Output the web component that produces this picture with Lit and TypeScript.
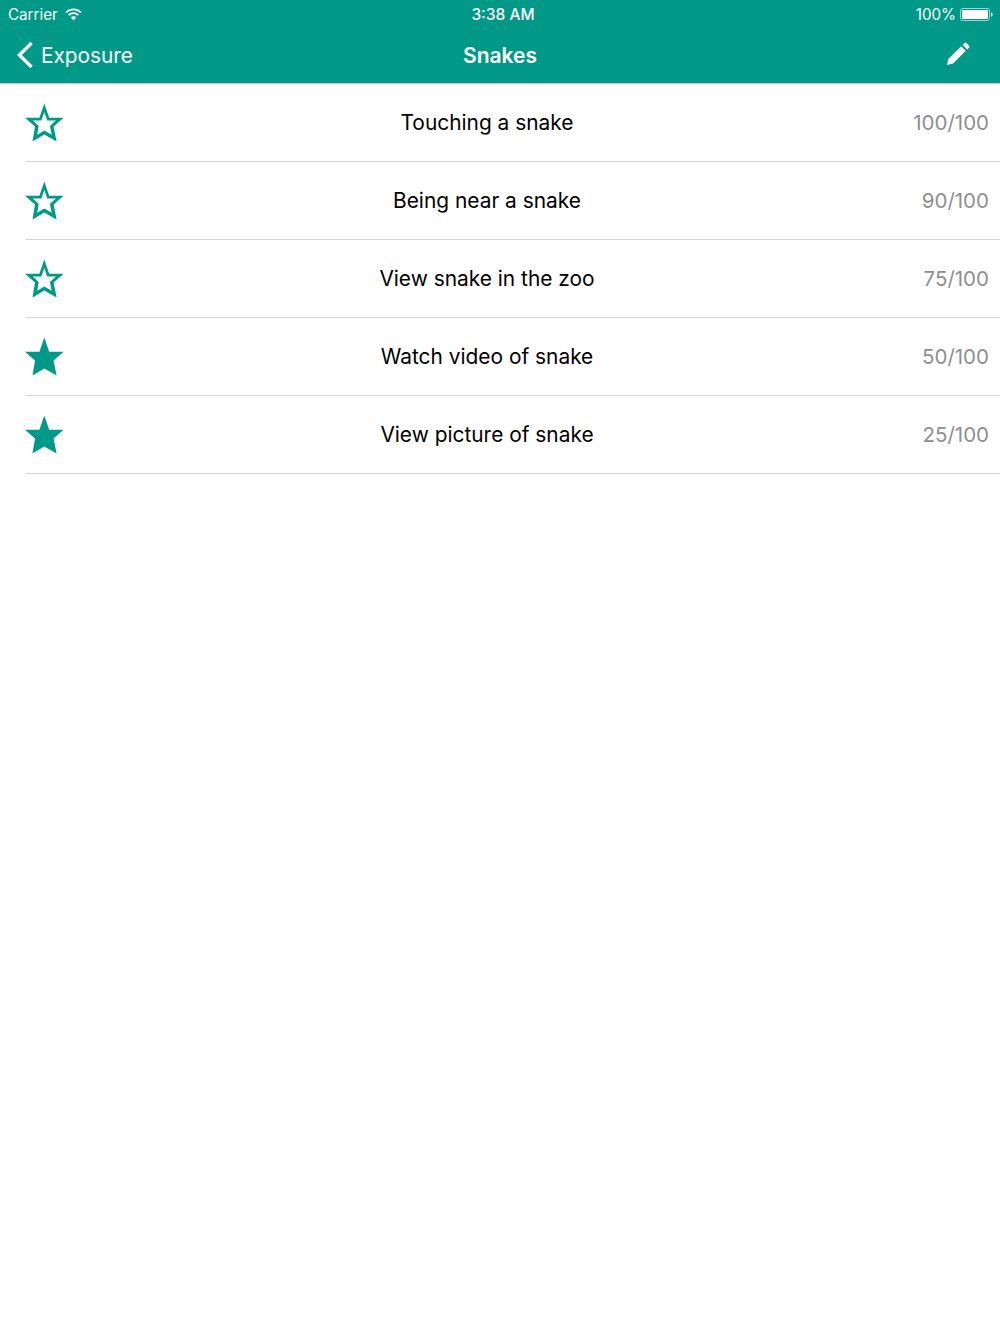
import { LitElement, html, css, svg } from 'lit';
import { customElement } from 'lit/decorators.js';

const rows = [
    { label: 'Touching a snake', score: '100/100', done: false },
    { label: 'Being near a snake', score: '90/100', done: false },
    { label: 'View snake in the zoo', score: '75/100', done: false },
    { label: 'Watch video of snake', score: '50/100', done: true },
    { label: 'View picture of snake', score: '25/100', done: true },
];

const starOuter = 'M19.3.5 24.2 14.8H38.6L28.6 23.6 31.6 38.5 19.3 31.5 7.5 38.5 10 23.6 0 14.8H14.4Z';
const starHole = 'M19.3 8.9 16.4 17.5H7.7L13.7 22.9 12.2 31.7 19.3 27.5 26.7 31.7 24.9 22.9 30.9 17.5H22.2Z';

@customElement('app-root')
export class AppRoot extends LitElement {
    static styles = css`
        :host {
            display: block;
            height: 1333px;
            background: #fff;
            font-family: Inter, Roboto, sans-serif;
        }
        .header {
            background: #009987;
            color: #fff;
            height: 83px;
            border-bottom: 1px solid #c4cdca;
        }
        .status {
            height: 27px;
            display: grid;
            grid-template-columns: 1fr auto 1fr;
            align-items: center;
            padding: 1px 7px 0 8px;
            box-sizing: border-box;
            font-size: 15.2px;
        }
        .carrier, .battery {
            display: flex;
            align-items: center;
            gap: 7px;
        }
        .battery {
            justify-content: flex-end;
            gap: 4px;
        }
        .clock {
            font-size: 15.5px;
            font-weight: 500;
            margin-left: 5px;
        }
        .nav {
            height: 56px;
            display: grid;
            grid-template-columns: 1fr auto 1fr;
            align-items: center;
            padding: 0 30px 0 16px;
        }
        .back {
            display: flex;
            align-items: center;
            gap: 7px;
            font-size: 20.8px;
        }
        .title {
            font-size: 21px;
            font-weight: 600;
            margin-left: 14px;
        }
        .edit {
            justify-self: end;
            display: flex;
            padding-bottom: 3px;
        }
        .list {
            padding-left: 26px;
        }
        .row {
            height: 77px;
            border-bottom: 1px solid #d4d4d6;
            display: grid;
            grid-template-columns: 40px 1fr 90px;
            align-items: center;
            padding-right: 11px;
        }
        .star {
            display: block;
            margin-left: -1px;
        }
        .label {
            text-align: center;
            font-size: 20.9px;
            color: #000;
            margin-left: 9px;
            padding-bottom: 1px;
        }
        .score {
            text-align: right;
            font-size: 20.5px;
            color: #8e8e93;
            padding-bottom: 1px;
        }
    `;

    private star(done: boolean) {
        const d = done ? starOuter : `${starOuter} ${starHole}`;
        return html`<svg class="star" width="40" height="40" viewBox="0 0 40 40">
            ${svg`<path d=${d} fill="#009987" fill-rule="evenodd"/>`}
        </svg>`;
    }

    render() {
        return html`
            <div class="header">
                <div class="status">
                    <div class="carrier">
                        <span>Carrier</span>
                        <svg width="17" height="13" viewBox="0 0 17 13">
                            <path d="M1 4.5a10.5 10.5 0 0 1 15 0" fill="none" stroke="#fff" stroke-width="1.7"/>
                            <path d="M3.6 7.2a6.8 6.8 0 0 1 9.8 0" fill="none" stroke="#fff" stroke-width="1.7"/>
                            <path d="M5.7 9.6a3.8 3.8 0 0 1 5.6 0L8.5 12.5z" fill="#fff"/>
                        </svg>
                    </div>
                    <div class="clock">3:38 AM</div>
                    <div class="battery">
                        <span>100%</span>
                        <svg width="33" height="13" viewBox="0 0 33 13">
                            <rect x="0.5" y="0.5" width="29" height="12" rx="2.5" fill="none" stroke="#fff" stroke-opacity="0.6"/>
                            <rect x="2" y="2" width="26" height="9" rx="1.2" fill="#fff"/>
                            <path d="M31 4.5c1 0 1.5.6 1.5 2s-.5 2-1.5 2z" fill="#fff"/>
                        </svg>
                    </div>
                </div>
                <div class="nav">
                    <div class="back">
                        <svg width="18" height="28" viewBox="0 0 18 28">
                            <path d="M15.6 2 3.4 14 15.6 26" fill="none" stroke="#fff" stroke-width="3.4"/>
                        </svg>
                        <span>Exposure</span>
                    </div>
                    <div class="title">Snakes</div>
                    <div class="edit">
                        <svg width="24" height="24" viewBox="0 0 26 26">
                            <path d="M1 25l1.6-6.6L16.4 4.6l5 5L7.6 23.4z" fill="#fff"/>
                            <path d="M18 3l2-2a1.4 1.4 0 0 1 2 0l3 3a1.4 1.4 0 0 1 0 2l-2 2z" fill="#fff"/>
                        </svg>
                    </div>
                </div>
            </div>
            <div class="list">
                ${rows.map(r => html`
                    <div class="row">
                        ${this.star(r.done)}
                        <div class="label">${r.label}</div>
                        <div class="score">${r.score}</div>
                    </div>
                `)}
            </div>
        `;
    }
}
